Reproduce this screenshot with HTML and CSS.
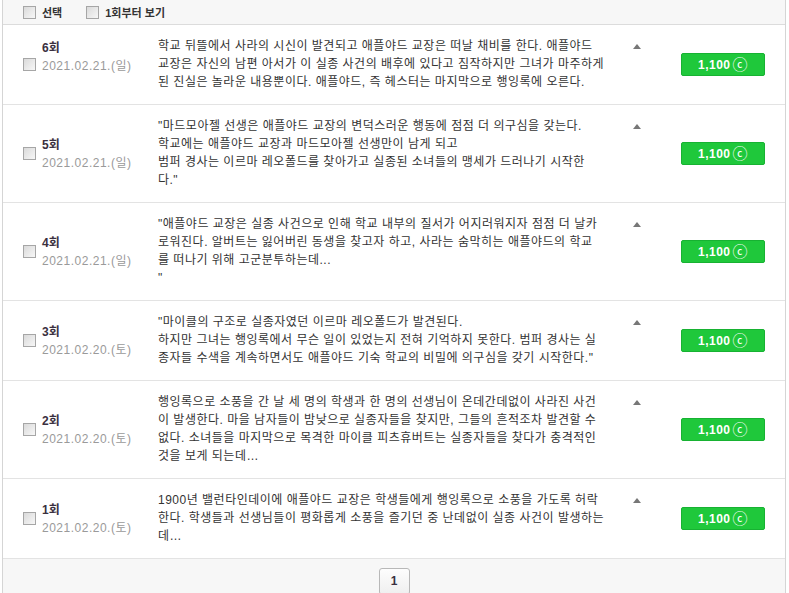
FILE: index.html
```html
<!DOCTYPE html>
<html lang="ko">

<head>
    <meta charset="UTF-8">
    <meta name="viewport" content="width=device-width, initial-scale=1.0">
    <title>회차 목록</title>
    <link rel="stylesheet" href="styles.css">
</head>

<body>
    <div class="episode-list">
        <div class="list-head">
            <label class="head-item"><span class="chk"></span>선택</label>
            <label class="head-item"><span class="chk"></span>1회부터 보기</label>
        </div>

        <div class="ep">
            <span class="chk"></span>
            <div class="ep-info">
                <div class="ep-no">6회</div>
                <div class="ep-date">2021.02.21.(일)</div>
                <div class="ep-tag"></div>
            </div>
            <p class="ep-desc">학교 뒤뜰에서 사라의 시신이 발견되고 애플야드 교장은 떠날 채비를 한다. 애플야드<br>교장은 자신의 남편 아서가 이 실종 사건의 배후에 있다고 짐작하지만 그녀가 마주하게<br>된 진실은 놀라운 내용뿐이다. 애플야드, 즉 헤스터는 마지막으로 행잉록에 오른다.</p>
            <span class="fold"></span>
            <button class="buy">1,100<span class="coin">ⓒ</span></button>
        </div>

        <div class="ep">
            <span class="chk"></span>
            <div class="ep-info">
                <div class="ep-no">5회</div>
                <div class="ep-date">2021.02.21.(일)</div>
            </div>
            <p class="ep-desc">"마드모아젤 선생은 애플야드 교장의 변덕스러운 행동에 점점 더 의구심을 갖는다.<br>학교에는 애플야드 교장과 마드모아젤 선생만이 남게 되고<br>범퍼 경사는 이르마 레오폴드를 찾아가고 실종된 소녀들의 맹세가 드러나기 시작한<br>다."</p>
            <span class="fold"></span>
            <button class="buy">1,100<span class="coin">ⓒ</span></button>
        </div>

        <div class="ep">
            <span class="chk"></span>
            <div class="ep-info">
                <div class="ep-no">4회</div>
                <div class="ep-date">2021.02.21.(일)</div>
            </div>
            <p class="ep-desc">"애플야드 교장은 실종 사건으로 인해 학교 내부의 질서가 어지러워지자 점점 더 날카<br>로워진다. 알버트는 잃어버린 동생을 찾고자 하고, 사라는 숨막히는 애플야드의 학교<br>를 떠나기 위해 고군분투하는데...<br>"</p>
            <span class="fold"></span>
            <button class="buy">1,100<span class="coin">ⓒ</span></button>
        </div>

        <div class="ep">
            <span class="chk"></span>
            <div class="ep-info">
                <div class="ep-no">3회</div>
                <div class="ep-date">2021.02.20.(토)</div>
            </div>
            <p class="ep-desc">"마이클의 구조로 실종자였던 이르마 레오폴드가 발견된다.<br>하지만 그녀는 행잉록에서 무슨 일이 있었는지 전혀 기억하지 못한다. 범퍼 경사는 실<br>종자들 수색을 계속하면서도 애플야드 기숙 학교의 비밀에 의구심을 갖기 시작한다."</p>
            <span class="fold"></span>
            <button class="buy">1,100<span class="coin">ⓒ</span></button>
        </div>

        <div class="ep">
            <span class="chk"></span>
            <div class="ep-info">
                <div class="ep-no">2회</div>
                <div class="ep-date">2021.02.20.(토)</div>
            </div>
            <p class="ep-desc">행잉록으로 소풍을 간 날 세 명의 학생과 한 명의 선생님이 온데간데없이 사라진 사건<br>이 발생한다. 마을 남자들이 밤낮으로 실종자들을 찾지만, 그들의 흔적조차 발견할 수<br>없다. 소녀들을 마지막으로 목격한 마이클 피츠휴버트는 실종자들을 찾다가 충격적인<br>것을 보게 되는데…</p>
            <span class="fold"></span>
            <button class="buy">1,100<span class="coin">ⓒ</span></button>
        </div>

        <div class="ep">
            <span class="chk"></span>
            <div class="ep-info">
                <div class="ep-no">1회</div>
                <div class="ep-date">2021.02.20.(토)</div>
            </div>
            <p class="ep-desc">1900년 밸런타인데이에 애플야드 교장은 학생들에게 행잉록으로 소풍을 가도록 허락<br>한다. 학생들과 선생님들이 평화롭게 소풍을 즐기던 중 난데없이 실종 사건이 발생하는<br>데…</p>
            <span class="fold"></span>
            <button class="buy">1,100<span class="coin">ⓒ</span></button>
        </div>

        <div class="paging">
            <a class="page-num">1</a>
        </div>
    </div>
</body>

</html>
```

FILE: styles.css
```css
body {
    margin: 0;
    font-family: "Liberation Sans", "Noto Sans CJK KR", sans-serif;
    font-size: 12px;
    color: #333;
    background-color: #fff;
}

.episode-list {
    margin: 0 3px 0 2px;
    border-left: 1px solid #d5d5d5;
    border-right: 1px solid #d5d5d5;
}

/* 체크박스 모양 */
.chk {
    display: inline-block;
    width: 11px;
    height: 11px;
    border: 1px solid #a6a6a6;
    background: linear-gradient(135deg, #dadada, #f7f7f7);
}

.list-head {
    display: flex;
    align-items: center;
    gap: 24px;
    height: 24px;
    padding-left: 20px;
    background-color: #f7f7f7;
    border-bottom: 1px solid #dcdcdc;
}

.head-item {
    display: flex;
    align-items: center;
    gap: 6px;
    font-size: 11px;
    font-weight: bold;
    color: #333;
}

.ep {
    display: grid;
    grid-template-columns: 19px 116px 475px 48px 84px;
    align-items: center;
    padding: 12px 20px 13px 20px;
    border-bottom: 1px solid #e3e3e3;
}

.ep-info {
    line-height: 18px;
    padding-top: 2px;
}

.ep-no {
    font-weight: bold;
    color: #3a3040;
}

.ep-date {
    color: #9a9a9a;
    letter-spacing: 0.5px;
}

/* 1화만 빈 줄이 하나 더 있음 */
.ep-tag {
    height: 16px;
}

.ep-desc {
    margin: 0;
    line-height: 18px;
    letter-spacing: 0.5px;
    white-space: nowrap;
    color: #333;
}

/* 접기 화살표 */
.fold {
    align-self: start;
    justify-self: start;
    margin-top: 7px;
    width: 0;
    height: 0;
    border-left: 4px solid transparent;
    border-right: 4px solid transparent;
    border-bottom: 5px solid #777;
}

.buy {
    height: 23px;
    padding: 0;
    border: 1px solid #17b232;
    border-radius: 2px;
    background-color: #1fc83b;
    color: #fff;
    font-family: "Liberation Sans", "Noto Sans CJK KR", sans-serif;
    font-size: 12px;
    font-weight: bold;
    letter-spacing: 0.5px;
    line-height: 21px;
}

.coin {
    margin-left: 2px;
    font-weight: normal;
    font-size: 15px;
    vertical-align: -1px;
}

.paging {
    display: flex;
    justify-content: center;
    padding: 9px 0 10px;
    background-color: #f7f7f7;
}

.page-num {
    display: block;
    width: 29px;
    height: 25px;
    line-height: 25px;
    text-align: center;
    border: 1px solid #b8b8b8;
    border-radius: 3px;
    background: linear-gradient(#fdfdfd, #efefef);
    font-weight: bold;
    color: #3a3040;
}
```
